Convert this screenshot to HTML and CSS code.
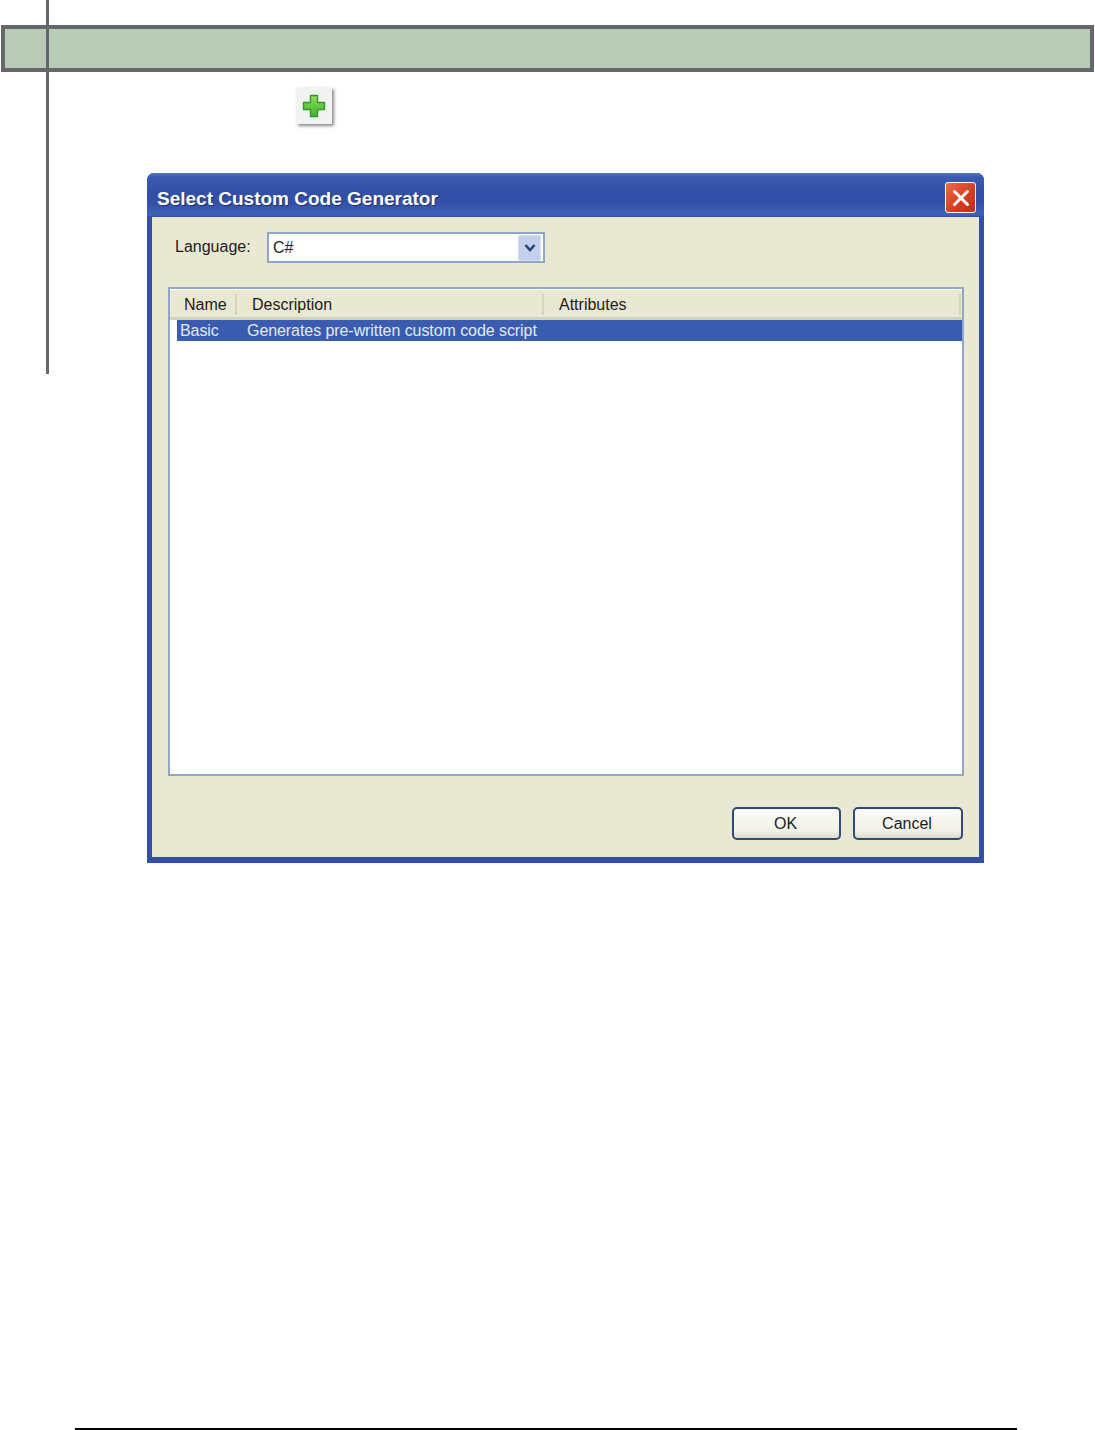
FILE: index.html
```html
<!DOCTYPE html>
<html lang="en">
<head>
  <meta charset="UTF-8" />
  <meta name="viewport" content="width=device-width, initial-scale=1.0"/>
  <title>Select Custom Code Generator</title>
  <link rel="stylesheet" href="styles.css">
</head>
<body>
  <div class="side-rule"></div>
  <div class="section-bar"></div>

  <div class="add-btn">
    <svg width="24" height="24" viewBox="0 0 24 24">
      <defs>
        <linearGradient id="plusFill" x1="0" y1="0" x2="0" y2="1">
          <stop offset="0" stop-color="#8fdc5a"/>
          <stop offset="1" stop-color="#3fb52c"/>
        </linearGradient>
      </defs>
      <path d="M8.5 1.5h7v7h7v7h-7v7h-7v-7h-7v-7h7z" fill="url(#plusFill)" stroke="#2f9a2a" stroke-width="1.4" stroke-linejoin="round"/>
    </svg>
  </div>

  <div class="dialog">
    <div class="titlebar">
      <span class="title">Select Custom Code Generator</span>
      <div class="close-btn">
        <svg width="20" height="20" viewBox="0 0 20 20">
          <path d="M3.5 3.5l13 13M16.5 3.5l-13 13" stroke="#fff" stroke-width="3" stroke-linecap="round"/>
        </svg>
      </div>
    </div>

    <div class="dialog-body">
      <div class="lang-row">
        <span class="lang-label">Language:</span>
        <div class="lang-select">
          <span>C#</span>
          <div class="drop-btn">
            <svg width="12" height="10" viewBox="0 0 12 10">
              <path d="M1.5 2l4.5 5 4.5-5" fill="none" stroke="#2c4372" stroke-width="2.6"/>
            </svg>
          </div>
        </div>
      </div>

      <div class="list">
        <div class="list-head">
          <div class="col col-name">Name</div>
          <div class="col col-desc">Description</div>
          <div class="col col-attr">Attributes</div>
        </div>
        <div class="list-row">
          <span class="cell-name">Basic</span>
          <span>Generates pre-written custom code script</span>
        </div>
      </div>

      <div class="actions">
        <div class="btn">OK</div>
        <div class="btn">Cancel</div>
      </div>
    </div>
  </div>

  <div class="foot-rule"></div>
</body>
</html>
```

FILE: styles.css
```css
* {
  box-sizing: border-box;
}

html, body {
  margin: 0;
  height: 1430px;
  overflow: hidden;
  background: #fff;
}

body {
  position: relative;
  display: flex;
  flex-direction: column;
  font-family: "Liberation Sans", Arial, sans-serif;
  font-size: 16px;
  color: #1c1c1c;
}

.side-rule {
  position: absolute;
  left: 46px;
  top: 0;
  width: 3px;
  height: 374px;
  background: #66666c;
}

.section-bar {
  height: 47px;
  margin: 25px 1px 0 1px;
  background: #b8cbb7;
  border: 4px solid #66666c;
}

.add-btn {
  width: 36px;
  height: 37px;
  margin: 15px 0 0 296px;
  display: flex;
  align-items: center;
  justify-content: center;
  background: #f2f2f0;
  box-shadow: 2px 2px 3px #8a8a8a;
}

.dialog {
  width: 837px;
  height: 690px;
  margin: 49px 0 0 147px;
  display: flex;
  flex-direction: column;
  background: #3350a8;
  border-radius: 7px 7px 0 0;
  padding: 0 5px 6px 5px;
}

.titlebar {
  height: 44px;
  flex-shrink: 0;
  margin: 0 -5px;
  padding: 8px 8px 0 10px;
  display: flex;
  align-items: center;
  justify-content: space-between;
  border-radius: 7px 7px 0 0;
  background: linear-gradient(#4f78c4 0, #3a5bb0 4px, #3350a8 18px, #3350a8 30px, #3f62b6 42px, #2f4a9f 44px);
}

.title {
  color: #fff;
  font-weight: bold;
  font-size: 19px;
  text-shadow: 1px 1px 1px #1c2f70;
}

.close-btn {
  width: 31px;
  height: 31px;
  margin-top: -3px;
  display: flex;
  align-items: center;
  justify-content: center;
  background: linear-gradient(135deg, #ec6a45, #d63a1e 60%, #bf3015);
  border: 1px solid #fff;
  border-radius: 3px;
}

.dialog-body {
  flex: 1;
  display: flex;
  flex-direction: column;
  padding: 15px 15px 17px 16px;
  background: #e9e8d2;
}

.lang-row {
  display: flex;
  align-items: center;
  height: 31px;
  padding-left: 7px;
}

.lang-label {
  width: 92px;
  padding-bottom: 2px;
}

.lang-select {
  width: 278px;
  height: 31px;
  display: flex;
  align-items: center;
  justify-content: space-between;
  padding: 0 2px 0 4px;
  background: #fff;
  border: 2px solid #8fa6c8;
}

.drop-btn {
  width: 23px;
  height: 26px;
  display: flex;
  align-items: center;
  justify-content: center;
  background: #c3d0ec;
  border: 1px solid #d5def2;
  border-radius: 2px;
}

.list {
  flex: 1;
  margin-top: 24px;
  background: #fff;
  border: 2px solid #8fa8c8;
}

.list-head {
  display: flex;
  height: 31px;
  padding-top: 1px;
  background: #e9e8d2;
  border-top: 1px solid #fff;
  border-bottom: 3px solid #d3d1b6;
}

.col {
  height: 21px;
  margin-top: 3px;
  line-height: 21px;
  border-right: 2px solid #d6d4bd;
}

.col-name {
  width: 67px;
  padding-left: 14px;
}

.col-desc {
  width: 307px;
  padding-left: 15px;
}

.col-attr {
  width: 417px;
  padding-left: 15px;
}

.list-row {
  display: flex;
  height: 21px;
  margin: 0 0 0 7px;
  padding-left: 3px;
  line-height: 21px;
  letter-spacing: -0.07px;
  background: #3a5cb0;
  color: #e4e9f6;
}

.cell-name {
  width: 67px;
}

.actions {
  display: flex;
  justify-content: flex-end;
  gap: 12px;
  margin-top: 31px;
  padding-right: 1px;
}

.btn {
  width: 110px;
  height: 33px;
  padding-right: 2px;
  line-height: 30px;
  text-align: center;
  background: linear-gradient(#fbfbf8, #f1f0e8 75%, #dcdace);
  border: 2px solid #2f4a78;
  border-radius: 5px;
}

.btn:first-child {
  width: 109px;
}

.foot-rule {
  height: 2px;
  margin: auto 78px 0 75px;
  background: #000;
}
```
